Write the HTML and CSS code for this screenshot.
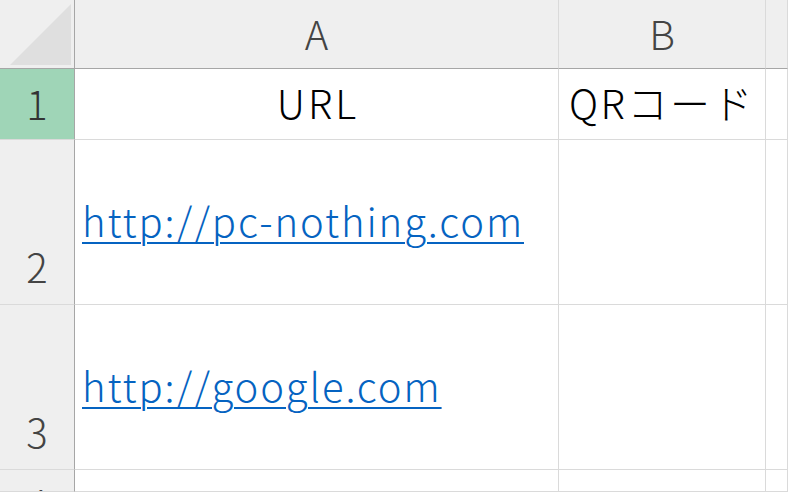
FILE: index.html
```html
<!DOCTYPE html>
<html lang="ja">
  <head>
    <meta charset="UTF-8" />
    <meta name="viewport" content="width=device-width, initial-scale=1.0" />
    <title>Sheet1</title>
    <link rel="stylesheet" href="styles.css">
  </head>
  <body>
    <div class="sheet">
      <div class="corner"><span class="corner__tri"></span></div>
      <div class="col-head">A</div>
      <div class="col-head">B</div>
      <div class="col-head col-head--last"></div>

      <div class="row-head row-head--active row-head--mid">1</div>
      <div class="cell cell--center cell--wide">URL</div>
      <div class="cell cell--center">QRコード</div>
      <div class="cell"></div>

      <div class="row-head">2</div>
      <div class="cell"><a class="link" href="http://pc-nothing.com">http://pc-nothing.com</a></div>
      <div class="cell"></div>
      <div class="cell"></div>

      <div class="row-head">3</div>
      <div class="cell"><a class="link" href="http://google.com">http://google.com</a></div>
      <div class="cell"></div>
      <div class="cell"></div>

      <div class="row-head row-head--peek">4</div>
      <div class="cell"></div>
      <div class="cell"></div>
      <div class="cell"></div>
    </div>
  </body>
</html>
```

FILE: styles.css
```css
* {
  box-sizing: border-box;
  margin: 0;
  padding: 0;
}
:root {
  --head-bg: #efefef;
  --head-line: #a6a6a6;
  --grid: #dadada;
  --active: #9fd5b7;
  --link: #0563c1;
}
body {
  background: #fff;
  font: 300 40px/1 "Noto Sans CJK JP", "Noto Sans", sans-serif;
  width: 788px;
  height: 492px;
  overflow: hidden;
}
.sheet {
  display: grid;
  grid-template-columns: 75px 484px 207px 1fr;
  grid-template-rows: 69px 71px 165px 165px 1fr;
  height: 492px;
  overflow: hidden;
}
.corner {
  background: var(--head-bg);
  border-right: 1px solid var(--head-line);
  border-bottom: 1px solid var(--head-line);
  position: relative;
}
.corner__tri {
  position: absolute;
  left: 10px;
  top: 4px;
  width: 61px;
  height: 61px;
  background: #dfdfdf;
  clip-path: polygon(100% 0, 100% 100%, 0 100%);
}
.col-head {
  background: var(--head-bg);
  border-right: 1px solid var(--grid);
  border-bottom: 1px solid var(--head-line);
  color: #444;
  display: flex;
  align-items: center;
  justify-content: center;
  padding-bottom: 3px;
}
.row-head {
  background: var(--head-bg);
  border-right: 1px solid var(--head-line);
  border-bottom: 1px solid var(--grid);
  color: #444;
  display: flex;
  align-items: flex-end;
  justify-content: center;
  padding-bottom: 18px;
}
.row-head--mid {
  align-items: center;
  padding-bottom: 2px;
}
.row-head--peek {
  align-items: flex-start;
  padding: 12px 0 0;
  overflow: hidden;
}
.row-head--active {
  background: var(--active);
  color: #333;
}
.cell {
  border-right: 1px solid var(--grid);
  border-bottom: 1px solid var(--grid);
  color: #000;
  display: flex;
  align-items: center;
  padding: 0 0 4px 7px;
  white-space: nowrap;
  letter-spacing: 1.9px;
}
.cell--center {
  justify-content: center;
  padding-left: 0;
  letter-spacing: 2.5px;
}
.cell--wide {
  letter-spacing: 3px;
  padding-left: 3px;
}
.link {
  color: var(--link);
  text-decoration: underline;
  text-decoration-thickness: 2px;
  text-underline-offset: 5px;
}
```
